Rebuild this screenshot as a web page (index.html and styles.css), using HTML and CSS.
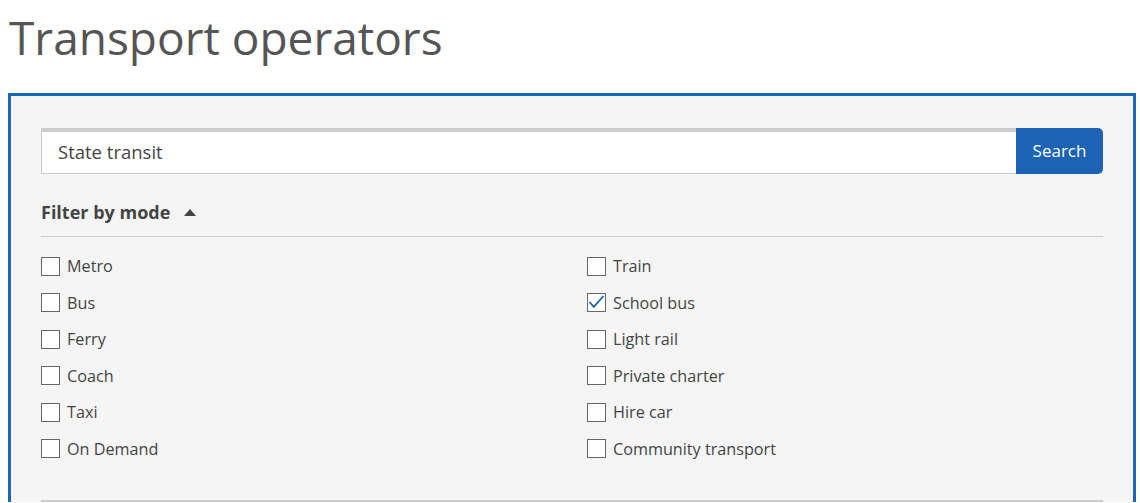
FILE: index.html
```html
<!DOCTYPE html>
<html lang="en">
<head>
<meta charset="utf-8">
<title>Transport operators</title>
<link rel="stylesheet" href="styles.css">
</head>
<body>
<h1 class="page-title">Transport operators</h1>
<section class="panel">
  <form class="search" onsubmit="return false">
    <input class="search-input" type="text" value="State transit" aria-label="Search">
    <button class="search-btn" type="submit">Search</button>
  </form>
  <div class="filter-head">
    <span class="filter-title">Filter by mode</span>
    <span class="caret"></span>
  </div>
  <div class="options">
    <label class="opt"><span class="box"></span>Metro</label>
    <label class="opt"><span class="box"></span>Train</label>
    <label class="opt"><span class="box"></span>Bus</label>
    <label class="opt"><span class="box checked"><svg viewBox="0 0 19 19" width="19" height="19"><path d="M2.5 9 L6.8 13.8 L16.5 3" fill="none" stroke="#1d63b5" stroke-width="1.8"/></svg></span>School bus</label>
    <label class="opt"><span class="box"></span>Ferry</label>
    <label class="opt"><span class="box"></span>Light rail</label>
    <label class="opt"><span class="box"></span>Coach</label>
    <label class="opt"><span class="box"></span>Private charter</label>
    <label class="opt"><span class="box"></span>Taxi</label>
    <label class="opt"><span class="box"></span>Hire car</label>
    <label class="opt"><span class="box"></span>On Demand</label>
    <label class="opt"><span class="box"></span>Community transport</label>
  </div>
  <div class="bottom-rule"></div>
</section>
</body>
</html>
```
FILE: styles.css
```css
html, body {
  margin: 0;
  padding: 0;
  background: #fff;
}
body {
  font-family: "Open Sans", "Noto Sans", sans-serif;
  color: #444;
  padding: 0 4px 0 8px;
}
.page-title {
  margin: 0;
  padding: 5px 0 0 1px;
  height: 93px;
  box-sizing: border-box;
  font-weight: 400;
  font-size: 46px;
  line-height: 64px;
  color: #555;
}
.panel {
  border: 3px solid #1a66b8;
  border-bottom: none;
  background: #f5f5f5;
  padding: 32px 30px 0 30px;
}
.search {
  display: flex;
  height: 46px;
}
.search-input {
  flex: 1;
  box-sizing: border-box;
  height: 46px;
  border: 1px solid #ccc;
  border-top: 4px solid #ccc;
  border-right: none;
  background: #fff;
  font-family: inherit;
  font-size: 18.5px;
  color: #444;
  padding: 0 16px 2px 16px;
  outline: none;
  margin: 0;
}
.search-btn {
  width: 87px;
  height: 46px;
  border: none;
  background: #1d63b5;
  color: #fff;
  font-family: inherit;
  font-size: 17px;
  border-radius: 0 5px 5px 0;
  margin: 0;
  padding: 0 0 2px 0;
}
.filter-head {
  display: flex;
  align-items: center;
  gap: 14px;
  height: 63px;
  border-bottom: 1px solid #ccc;
  box-sizing: border-box;
  padding-top: 13px;
}
.filter-title {
  font-weight: 700;
  font-size: 18px;
  color: #444;
}
.caret {
  width: 0;
  height: 0;
  margin-top: 1px;
  border-left: 6px solid transparent;
  border-right: 6px solid transparent;
  border-bottom: 7px solid #444;
}
.options {
  display: grid;
  grid-template-columns: 1fr 1fr;
  column-gap: 30px;
  padding-top: 11px;
  row-gap: 0;
}
.opt {
  display: flex;
  align-items: center;
  gap: 7px;
  height: 36.5px;
  font-size: 16.2px;
  color: #444;
}
.box {
  width: 17px;
  height: 17px;
  border: 1px solid #666;
  background: #fff;
  position: relative;
  flex: none;
}
.box svg {
  position: absolute;
  left: -1px;
  top: -1px;
}
.bottom-rule {
  margin-top: 33px;
  border-top: 2px solid #ccc;
}
```
